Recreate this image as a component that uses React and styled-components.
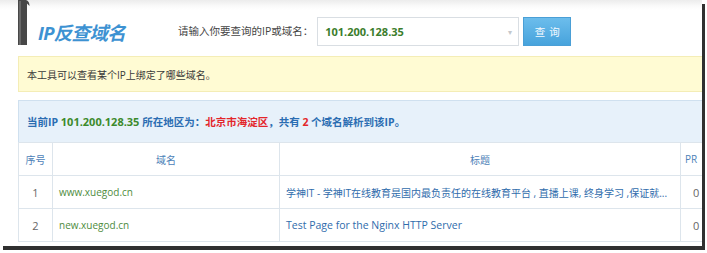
import React from 'react';
import styled, { createGlobalStyle } from 'styled-components';

const GlobalStyle = createGlobalStyle`
  html, body {
    margin: 0;
    padding: 0;
    background: #fff;
  }
  body {
    font-family: "Open Sans", "Noto Sans CJK SC", sans-serif;
    color: #333;
  }
`;

const Shot = styled.div`
  padding: 0 6px 6px 0;
`;

const Frame = styled.div`
  width: 702px;
  height: 246px;
  overflow: hidden;
  background: #fff;
  box-shadow: 3px 4px 0 #303030;
`;

const Page = styled.div`
  width: 740px;
  padding-left: 18px;
  background: linear-gradient(#ececec 0, #fafafa 6px, #fff 10px);
`;

const Header = styled.div`
  display: flex;
  align-items: flex-start;
  height: 56px;
`;

const Ribbon = styled.svg`
  flex: none;
`;

const Title = styled.h1`
  margin: 22px 0 0 8px;
  font-size: 18.5px;
  line-height: 22px;
  font-style: italic;
  font-weight: bold;
  color: #3d92d2;
  letter-spacing: -0.7px;
`;

const Label = styled.span`
  margin: 24px 0 0 53px;
  font-size: 10.5px;
  line-height: 14px;
  color: #444;
`;

const InputBox = styled.div`
  margin: 17px 0 0 4px;
  width: 187px;
  height: 27px;
  border: 1px solid #d9dee3;
  display: flex;
  align-items: center;
  justify-content: space-between;
  padding: 0 6px 0 7px;
  box-sizing: content-box;
  background: #fff;
`;

const InputText = styled.span`
  font-size: 11px;
  font-weight: bold;
  color: #3b7d2c;
`;

const Caret = styled.span`
  font-size: 8px;
  color: #c4c8cc;
`;

const Button = styled.button`
  margin: 17px 0 0 4px;
  width: 48px;
  height: 29px;
  border: 1px solid #4a9fd6;
  background: linear-gradient(#6cbdec, #47a3dc);
  color: #f4faff;
  font-family: inherit;
  font-size: 10.5px;
  letter-spacing: 4px;
  padding: 0 0 0 4px;
`;

const Notice = styled.div`
  height: 34px;
  display: flex;
  align-items: center;
  padding-left: 8px;
  background: #fffbd3;
  border: 1px solid #f4edb6;
  font-size: 10px;
  color: #3a3a3a;
`;

const Info = styled.div`
  margin-top: 8px;
  height: 41px;
  display: flex;
  align-items: center;
  padding-left: 8px;
  background: #e7f1fa;
  border: 1px solid #cfe0ef;
  border-bottom: none;
  font-size: 10.5px;
  font-weight: bold;
  color: #2b6db2;
  white-space: pre;
`;

const Hl = styled.span`
  color: ${p => p.$tone === 'red' ? '#e3262b' : '#3c8a2c'};
  font-size: ${p => p.$tone === 'red' ? '10.5px' : '11px'};
`;

const Table = styled.table`
  border-collapse: collapse;
  table-layout: fixed;
  width: 720px;
  background: #fff;

  td, th {
    border: 1px solid #dde5ec;
    height: 32px;
    padding: 0 6px;
    white-space: nowrap;
    overflow: hidden;
    text-overflow: ellipsis;
  }
  th {
    font-weight: normal;
    font-size: 10px;
    color: #4d82b8;
    text-align: center;
  }
`;

const HeadPR = styled.th`
  && {
    text-align: left;
    padding-left: 4px;
  }
`;

const Cell = styled.td`
  text-align: ${p => p.$center ? 'center' : 'left'};
  color: ${p => p.$tone === 'green' ? '#4e8c3d' : p.$tone === 'blue' ? '#2f6cac' : '#666'};
  font-size: ${p => p.$size || 10.5}px;
  && {
    padding-left: ${p => p.$pad || 6}px;
  }
`;

const rows = [
  { n: 1, domain: 'www.xuegod.cn', title: '学神IT - 学神IT在线教育是国内最负责任的在线教育平台 , 直播上课, 终身学习 ,保证就...', size: 10, pr: 0 },
  { n: 2, domain: 'new.xuegod.cn', title: 'Test Page for the Nginx HTTP Server', size: 10.5, pr: 0 },
];

export default function App() {
  return (
    <>
      <GlobalStyle />
      <Shot>
        <Frame>
          <Page>
            <Header>
              <Ribbon width="12" height="46" viewBox="0 0 12 46">
                <path d="M0 0 H8 Q11.5 1 11.5 6 L9 3.5 V45 H0 Z" fill="#474747" />
                <rect x="1" y="1" width="2" height="44" fill="#686868" />
              </Ribbon>
              <Title>IP反查域名</Title>
              <Label>请输入你要查询的IP或域名：</Label>
              <InputBox>
                <InputText>101.200.128.35</InputText>
                <Caret>▾</Caret>
              </InputBox>
              <Button>查询</Button>
            </Header>
            <Notice>本工具可以查看某个IP上绑定了哪些域名。</Notice>
            <Info>
              当前IP <Hl>101.200.128.35</Hl> 所在地区为：<Hl $tone="red">北京市海淀区</Hl>，共有 <Hl $tone="red">2</Hl> 个域名解析到该IP。
            </Info>
            <Table>
              <colgroup>
                <col style={{ width: 34 }} />
                <col style={{ width: 227 }} />
                <col style={{ width: 401 }} />
                <col style={{ width: 58 }} />
              </colgroup>
              <thead>
                <tr>
                  <th>序号</th>
                  <th>域名</th>
                  <th>标题</th>
                  <HeadPR>PR</HeadPR>
                </tr>
              </thead>
              <tbody>
                {rows.map(r => (
                  <tr key={r.n}>
                    <Cell $center $size={11}>{r.n}</Cell>
                    <Cell $tone="green" $size={10}>{r.domain}</Cell>
                    <Cell $tone="blue" $size={r.size}>{r.title}</Cell>
                    <Cell $size={11} $pad={12}>{r.pr}</Cell>
                  </tr>
                ))}
              </tbody>
            </Table>
          </Page>
        </Frame>
      </Shot>
    </>
  );
}
